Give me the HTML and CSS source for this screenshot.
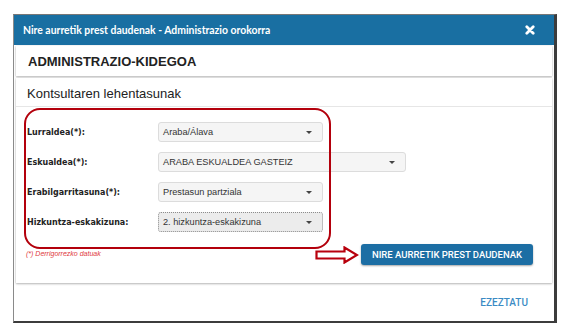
FILE: index.html
```html
<!DOCTYPE html>
<html>
<head>
<meta charset="utf-8">
<link rel="stylesheet" href="styles.css">
</head>
<body>
<div class="dialog">
  <div class="dlg-head">
    <span class="dlg-title">Nire aurretik prest daudenak - Administrazio orokorra</span>
    <svg class="close" width="10" height="10" viewBox="0 0 10 10"><path d="M1.8 1.8 L8.2 8.2 M8.2 1.8 L1.8 8.2" stroke="#fff" stroke-width="2.8" stroke-linecap="round"/></svg>
  </div>
  <div class="dlg-body">
    <div class="card card-title">ADMINISTRAZIO-KIDEGOA</div>
    <div class="card card-form">
      <div class="form-head">Kontsultaren lehentasunak</div>
      <div class="form-body">
        <div class="fields">
          <div class="row"><span class="lbl">Lurraldea(*):</span><div class="sel">Araba/Álava<i class="caret"></i></div></div>
          <div class="row"><span class="lbl">Eskualdea(*):</span><div class="sel wide">ARABA ESKUALDEA GASTEIZ<i class="caret"></i></div></div>
          <div class="row"><span class="lbl">Erabilgarritasuna(*):</span><div class="sel">Prestasun partziala<i class="caret"></i></div></div>
          <div class="row"><span class="lbl">Hizkuntza-eskakizuna:</span><div class="sel focus">2. hizkuntza-eskakizuna<i class="caret"></i></div></div>
          <div class="highlight"></div>
        </div>
        <div class="foot">
          <span class="note">(*) Derrigorrezko datuak</span>
          <div class="act">
            <svg class="arrow" width="44" height="18" viewBox="0 0 44 18"><path d="M1.5 5.5 H29.5 V1.5 L42 9 L29.5 16.5 V12.5 H1.5 Z" fill="#fff" stroke="#b8000d" stroke-width="2.2" stroke-linejoin="miter"/></svg>
            <button class="btn">NIRE AURRETIK PREST DAUDENAK</button>
          </div>
        </div>
      </div>
    </div>
    <div class="dlg-foot"><span class="cancel">EZEZTATU</span></div>
  </div>
</div>
</body>
</html>
```
FILE: styles.css
```css
* { box-sizing: border-box; }
body { margin: 0; background: #fff; font-family: "Liberation Sans", Arial, sans-serif; }
.dialog {
  margin: 14px 0 0 13px;
  width: 544px;
  height: 309px;
  border-left: 1px solid #8a8a8a;
  border-top: 1px solid #777;
  border-right: 3px solid #3c3c3c;
  border-bottom: 2px solid #3c3c3c;
  background: #fff;
  display: flex;
  flex-direction: column;
}
.dlg-head {
  height: 30px;
  background: #196fa2;
  display: flex;
  align-items: center;
  justify-content: space-between;
  padding: 0 19px 0 9px;
  flex: none;
}
.dlg-title { color: #fff; font-family: Lato, "Open Sans", sans-serif; font-weight: 700; font-size: 10.4px; }
.close { display: block; }
.dlg-body { flex: 1; display: flex; flex-direction: column; padding: 1px 2px 0 2px; }
.card { background: #fff; box-shadow: 0 1px 2px rgba(0,0,0,0.28), 0 0 1px rgba(0,0,0,0.15); }
.card-title {
  height: 30px;
  display: flex;
  align-items: center;
  padding-left: 12px;
  font-weight: 700;
  font-size: 13px;
  color: #222;
}
.card-form { margin-top: 2px; height: 205px; display: flex; flex-direction: column; }
.form-head {
  height: 29px;
  border-bottom: 1px solid #e6e6e6;
  display: flex;
  align-items: center;
  padding: 2px 0 0 11px;
  font-size: 13px;
  color: #222;
  flex: none;
}
.form-body { padding: 15px 0 0 11px; }
.fields { position: relative; display: flex; flex-direction: column; gap: 10px; }
.row { display: flex; align-items: center; height: 20px; }
.lbl { width: 131px; font-family: "DejaVu Sans Condensed", "DejaVu Sans", sans-serif; font-weight: 700; font-size: 8.9px; color: #222; }
.sel {
  position: relative;
  width: 165px;
  height: 20px;
  background: #f5f5f5;
  border: 1px solid #dcdcdc;
  border-radius: 3px;
  font-size: 9.2px;
  color: #333;
  display: flex;
  align-items: center;
  padding-left: 4px;
}
.sel.wide { width: 248px; }
.sel.focus { background: #ececec; border: 1px dotted #8c8c8c; }
.caret {
  position: absolute;
  right: 10px;
  top: 8px;
  width: 0; height: 0;
  border-left: 3px solid transparent;
  border-right: 3px solid transparent;
  border-top: 3px solid #444;
}
.highlight {
  position: absolute;
  left: -3px;
  top: -14px;
  width: 307px;
  height: 141px;
  border: 2px solid #b3000c;
  border-radius: 16px;
  pointer-events: none;
}
.foot { display: flex; justify-content: space-between; align-items: flex-start; margin-top: 12px; padding-right: 19px; }
.note { color: #e0393e; font-style: italic; font-size: 7px; margin-top: 6px; margin-left: -1px; }
.act { display: flex; align-items: center; gap: 2px; }
.arrow { display: block; }
.btn {
  height: 21px;
  width: 172px;
  background: #1c6ea4;
  color: #fff;
  border: none;
  border-radius: 3px;
  font-family: Roboto, sans-serif;
  font-weight: 500;
  font-size: 9.5px;
  padding: 0;
  box-shadow: 0 1px 2px rgba(0,0,0,0.35);
}
.dlg-foot { flex: 1; display: flex; align-items: center; justify-content: flex-end; padding: 0 24px 0 0; }
.cancel { color: #3b8bc4; font-family: Roboto, sans-serif; font-weight: 500; font-size: 10px; }
```
